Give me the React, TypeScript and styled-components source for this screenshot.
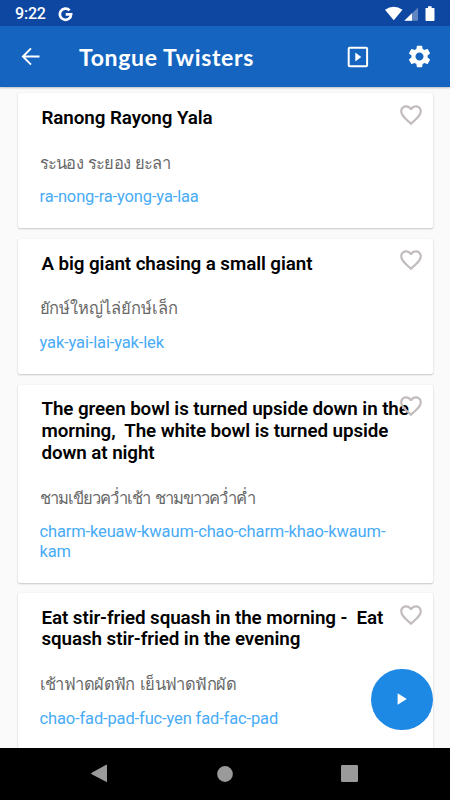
import React from "react";
import styled, { createGlobalStyle } from "styled-components";

const GlobalStyle = createGlobalStyle`
  * { box-sizing: border-box; }
  body { margin: 0; background: #fafafa; font-family: Roboto, "Liberation Sans", sans-serif; }
`;

const Screen = styled.div`
  position: relative;
  display: flex;
  flex-direction: column;
  width: 450px;
  height: 800px;
  overflow: hidden;
  background: #fafafa;
`;

const StatusBar = styled.div`
  display: flex;
  align-items: center;
  flex: none;
  height: 26px;
  padding: 2px 14px 0 15px;
  background: #0d47a1;
  color: #fff;
`;

const Clock = styled.span`
  font-size: 16px;
  font-weight: 500;
  line-height: 20px;
  width: 43px;
  letter-spacing: -0.2px;
  white-space: nowrap;
`;

const StatusIcons = styled.div`
  display: flex;
  align-items: center;
  margin-left: auto;
`;

const Toolbar = styled.header`
  display: flex;
  align-items: center;
  flex: none;
  height: 61px;
  padding: 0 17px;
  background: #1565c0;
  color: #fff;
  box-shadow: 0 1px 2px rgba(0, 0, 0, 0.25);
  z-index: 1;
`;

const Title = styled.h1`
  flex: 1;
  margin: 0 0 0 34px;
  font: 700 23px/28px Lato, sans-serif;
  letter-spacing: 0.66px;
  white-space: nowrap;
`;

const IconButton = styled.button<{ $gap?: number }>`
  display: flex;
  margin: 0 0 0 ${(p) => p.$gap ?? 0}px;
  padding: 0;
  border: 0;
  background: none;
  color: inherit;
`;

const List = styled.main`
  display: flex;
  flex-direction: column;
  gap: 10.6px;
  flex: 1;
  min-height: 0;
  overflow: hidden;
  padding: 6.2px 17.5px 0 17.5px;
`;

const Card = styled.article`
  position: relative;
  flex: none;
  padding: 14.6px 22px 21.8px;
  border-radius: 2px;
  background: #fff;
  box-shadow: 0 1px 2px rgba(0, 0, 0, 0.2), 0 0 1px rgba(0, 0, 0, 0.12);
`;

const Phrase = styled.h2`
  margin: 0 -6px 0 2px;
  font-size: 18.8px;
  font-weight: 600;
  line-height: 21.7px;
  letter-spacing: -0.08px;
  color: #000;
  white-space: pre;
`;

const Thai = styled.p<{ $tracking: number }>`
  margin: 22.1px 0 0;
  font-size: 16.5px;
  font-weight: 300;
  line-height: 24px;
  letter-spacing: ${(p) => p.$tracking}px;
  word-spacing: 1.5px;
  color: #686868;
  white-space: nowrap;
`;

const Romanized = styled.p`
  margin: 11.7px 0 0;
  font-size: 16.5px;
  font-weight: 400;
  line-height: 19.3px;
  letter-spacing: -0.14px;
  color: #48abf6;
  white-space: pre;
`;

const Favorite = styled.button`
  position: absolute;
  top: 8.5px;
  right: 9px;
  display: flex;
  padding: 0;
  border: 0;
  background: none;
`;

const Fab = styled.button`
  position: absolute;
  right: 17.5px;
  bottom: 70px;
  display: flex;
  align-items: center;
  justify-content: center;
  width: 61.5px;
  height: 61.5px;
  padding: 0;
  border: 0;
  border-radius: 50%;
  background: #1e88e5;
  z-index: 2;
`;

const NavBar = styled.nav`
  display: flex;
  flex: none;
  align-items: center;
  justify-content: space-between;
  height: 52.5px;
  padding: 0 92px 0 91px;
  background: #000;
  z-index: 1;
`;

const twisters = [
  { phrase: "Ranong Rayong Yala", thai: "ระนอง ระยอง ยะลา", roman: "ra-nong-ra-yong-ya-laa", tracking: -0.72 },
  { phrase: "A big giant chasing a small giant", thai: "ยักษ์ใหญ่ไล่ยักษ์เล็ก", roman: "yak-yai-lai-yak-lek", tracking: -0.06 },
  {
    phrase: "The green bowl is turned upside down in the\nmorning,  The white bowl is turned upside\ndown at night",
    thai: "ชามเขียวคว่ำเช้า ชามขาวคว่ำค่ำ",
    roman: "charm-keuaw-kwaum-chao-charm-khao-kwaum-\nkam",
    tracking: -0.96,
  },
  {
    phrase: "Eat stir-fried squash in the morning -  Eat\nsquash stir-fried in the evening",
    thai: "เช้าฟาดผัดฟัก เย็นฟาดฟักผัด",
    roman: "chao-fad-pad-fuc-yen fad-fac-pad",
    tracking: -0.57,
  },
];

const HEART =
  "M16.5 3c-1.74 0-3.41.81-4.5 2.09C10.91 3.81 9.24 3 7.5 3 4.42 3 2 5.42 2 8.5c0 3.78 3.4 6.86 8.55 11.54L12 21.35l1.45-1.32C18.6 15.36 22 12.28 22 8.5 22 5.42 19.58 3 16.5 3zm-4.4 15.55l-.1.1-.1-.1C7.14 14.24 4 11.39 4 8.5 4 6.5 5.5 5 7.5 5c1.54 0 3.04.99 3.57 2.36h1.87C13.46 5.99 14.96 5 16.5 5c2 0 3.5 1.5 3.5 3.5 0 2.89-3.14 5.74-7.9 10.05z";
const GEAR =
  "M19.14 12.94c.04-.3.06-.61.06-.94 0-.32-.02-.64-.07-.94l2.03-1.58c.18-.14.23-.41.12-.61l-1.92-3.32c-.12-.22-.37-.29-.59-.22l-2.39.96c-.5-.38-1.03-.7-1.62-.94l-.36-2.54c-.04-.24-.24-.41-.48-.41h-3.84c-.24 0-.43.17-.47.41l-.36 2.54c-.59.24-1.13.57-1.62.94l-2.39-.96c-.22-.08-.47 0-.59.22L2.74 8.87c-.12.21-.08.47.12.61l2.03 1.58c-.05.3-.09.63-.09.94s.02.64.07.94l-2.03 1.58c-.18.14-.23.41-.12.61l1.92 3.32c.12.22.37.29.59.22l2.39-.96c.5.38 1.03.7 1.62.94l.36 2.54c.05.24.24.41.48.41h3.84c.24 0 .44-.17.47-.41l.36-2.54c.59-.24 1.13-.56 1.62-.94l2.39.96c.22.08.47 0 .59-.22l1.92-3.32c.12-.22.07-.47-.12-.61l-2.01-1.58zM12 15.6c-1.98 0-3.6-1.62-3.6-3.6s1.62-3.6 3.6-3.6 3.6 1.62 3.6 3.6-1.62 3.6-3.6 3.6z";

export default function App() {
  return (
    <Screen>
      <GlobalStyle />
      <StatusBar>
        <Clock>9:22</Clock>
        <svg width="15" height="15" viewBox="0 0 15 15" fill="none" stroke="#fff" strokeWidth="2.7">
          <path d="M11.6 3.4A5.6 5.6 0 1 0 13.1 7.4H7.7" />
        </svg>
        <StatusIcons>
          <svg width="51" height="16" viewBox="0 0 51 16" fill="#fff">
            <path d="M0 3.8Q8.75-2.4 17.5 3.8L8.75 14.3Z" />
            <path d="M33 1.4V14.8H19.3Z" fillOpacity="0.35" />
            <path d="M27 7.3V14.8H19.3Z" />
            <path d="M40.6 1.9h2.4V.3h3.6v1.6h2.3q.6 0 .6.7v11.5q0 .9-.9.9h-7.2q-.9 0-.9-.9V2.6q0-.7.1-.7Z" />
          </svg>
        </StatusIcons>
      </StatusBar>
      <Toolbar>
        <IconButton aria-label="Back">
          <svg width="28" height="27" viewBox="0 0 28 27" fill="none" stroke="#fff" strokeWidth="1.9">
            <path d="M22.5 13.5H6M14 5.4l-8.1 8.1 8.1 8.1" />
          </svg>
        </IconButton>
        <Title>Tongue Twisters</Title>
        <IconButton aria-label="Play all">
          <svg width="22" height="22" viewBox="0 0 22 22">
            <rect x="1.7" y="1.8" width="18.4" height="18.4" rx="1" fill="none" stroke="#fff" strokeWidth="2" />
            <path d="M8.3 6.6v8.8l6-4.4z" fill="#fff" />
          </svg>
        </IconButton>
        <IconButton aria-label="Settings" $gap={37}>
          <svg width="27" height="27" viewBox="0 0 24 24" fill="#fff">
            <path d={GEAR} />
          </svg>
        </IconButton>
      </Toolbar>
      <List>
        {twisters.map((t) => (
          <Card key={t.phrase}>
            <Phrase>{t.phrase}</Phrase>
            <Thai lang="th" $tracking={t.tracking}>{t.thai}</Thai>
            <Romanized>{t.roman}</Romanized>
            <Favorite aria-label="Favorite">
              <svg width="26" height="26" viewBox="0 0 24 24" fill="#c2bcbd">
                <path d={HEART} />
              </svg>
            </Favorite>
          </Card>
        ))}
      </List>
      <Fab aria-label="Play">
        <svg width="10" height="12" viewBox="0 0 10 12" fill="#fff">
          <path d="M.6.3v11.4L9.8 6z" />
        </svg>
      </Fab>
      <NavBar>
        <svg width="17" height="19" viewBox="0 0 17 19" fill="#9a9a9a">
          <path d="M16 .7v17.6L.7 10.2q-1-.7 0-1.4L15.2.8z" />
        </svg>
        <svg width="16" height="16" viewBox="0 0 16 16" fill="#9a9a9a">
          <circle cx="8" cy="8" r="7.9" />
        </svg>
        <svg width="17" height="17" viewBox="0 0 17 17" fill="#9a9a9a">
          <rect width="17" height="17" rx="1.2" />
        </svg>
      </NavBar>
    </Screen>
  );
}
